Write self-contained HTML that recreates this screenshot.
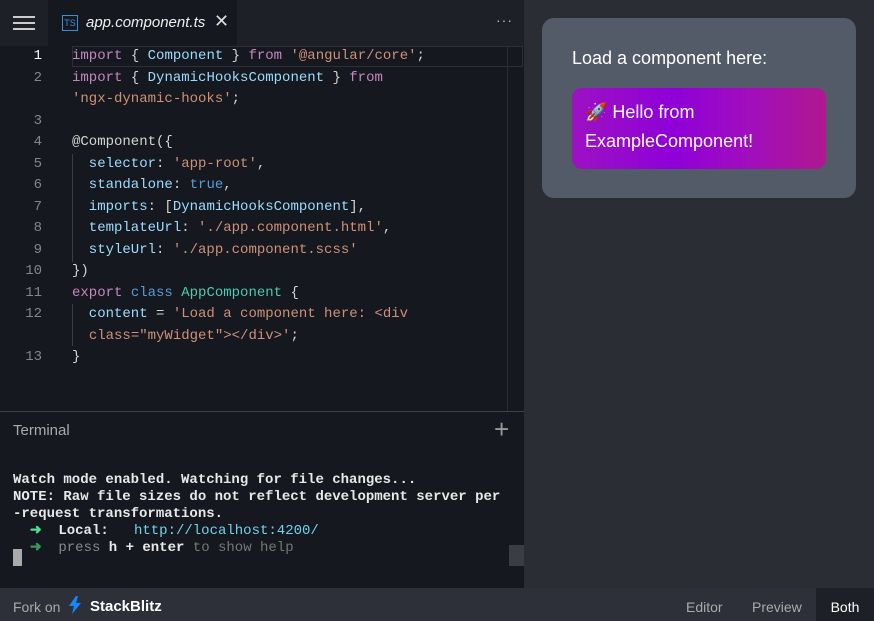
<!DOCTYPE html>
<html><head><style>
*{margin:0;padding:0;box-sizing:border-box}
html,body{width:874px;height:621px;overflow:hidden}
body{background:#2a2d34;font-family:"Liberation Sans",sans-serif;position:relative}
#ed{position:absolute;left:0;top:0;width:524px;height:411px;background:#15181e}
#tabs{position:absolute;left:0;top:0;width:524px;height:46px;background:#1d2027}
#menu{position:absolute;left:0;top:0;width:48px;height:46px;background:#1d2027}
#menu i{position:absolute;left:13px;width:22px;height:2px;background:#ccc}
#tab{position:absolute;left:48px;top:0;width:189px;height:46px;background:#15181e}
#code{position:absolute;left:0;top:46px;font-family:"Liberation Mono",monospace;font-size:14px;line-height:21.5px;white-space:pre;color:#9cdcfe}
.ln{position:absolute;left:0;width:42px;text-align:right;color:#858585}
.k{color:#c586c0}.s{color:#ce9178}.b{color:#569cd6}.t{color:#4ec9b0}.y{color:#ffd700}.w{color:#d4d4d4}
#term{position:absolute;left:0;top:411px;width:524px;height:177px;background:#15181e;border-top:1px solid #3c4048}
#tt{font-family:"Liberation Mono",monospace;font-size:14px;line-height:17px;color:#e8e8e8;position:absolute;left:13px;top:60px;white-space:pre;font-weight:bold}
#foot{position:absolute;left:0;top:588px;width:874px;height:33px;background:#2d3039;font-size:14px;color:#aaa}
</style></head><body>
<div id="ed">
<div id="tabs">
<div id="menu"><i style="top:16px"></i><i style="top:22px"></i><i style="top:28px"></i></div>
<div id="tab">
<div style="position:absolute;left:14px;top:15px;width:16px;height:16px;border:1px solid #3b8fd6;color:#3b8fd6;font-size:9px;line-height:14px;text-align:center">TS</div>
<div style="position:absolute;left:38px;top:14px;color:#eee;font-style:italic;font-size:15px">app.component.ts</div>
<div style="position:absolute;left:166px;top:11px;color:#ddd;font-size:18px">✕</div>
</div>
<div style="position:absolute;left:496px;top:12px;color:#bbb;font-size:14px;letter-spacing:1px">···</div>
</div>
<div style="position:absolute;left:72px;top:46px;width:451px;height:21px;border:1px solid #2c3038"></div>
<div style="position:absolute;left:507px;top:46px;width:1px;height:365px;background:#2a2d33"></div>
<div style="position:absolute;left:72px;top:154px;width:1px;height:108px;background:#3a3d44"></div>
<div style="position:absolute;left:72px;top:304px;width:1px;height:42px;background:#3a3d44"></div>
<div id="code">
<div class="ln" style="top:0;color:#fff">1</div><div class="ln" style="top:21.5px">2</div><div class="ln" style="top:64.5px">3</div><div class="ln" style="top:86px">4</div><div class="ln" style="top:107.5px">5</div><div class="ln" style="top:129px">6</div><div class="ln" style="top:150.5px">7</div><div class="ln" style="top:172px">8</div><div class="ln" style="top:193.5px">9</div><div class="ln" style="top:215px">10</div><div class="ln" style="top:236.5px">11</div><div class="ln" style="top:258px">12</div><div class="ln" style="top:301px">13</div>
<div style="position:absolute;left:72px;top:0"><span class="k">import</span> <span class="w">{</span> Component <span class="w">}</span> <span class="k">from</span> <span class="s">'@angular/core'</span><span class="w">;</span>
<span class="k">import</span> <span class="w">{</span> DynamicHooksComponent <span class="w">}</span> <span class="k">from</span>
<span class="s">'ngx-dynamic-hooks'</span><span class="w">;</span>

<span class="w">@Component({</span>
  selector<span class="w">:</span> <span class="s">'app-root'</span><span class="w">,</span>
  standalone<span class="w">:</span> <span class="b">true</span><span class="w">,</span>
  imports<span class="w">: [</span>DynamicHooksComponent<span class="w">],</span>
  templateUrl<span class="w">:</span> <span class="s">'./app.component.html'</span><span class="w">,</span>
  styleUrl<span class="w">:</span> <span class="s">'./app.component.scss'</span>
<span class="w">})</span>
<span class="k">export</span> <span class="b">class</span> <span class="t">AppComponent</span> <span class="w">{</span>
  content <span class="w">=</span> <span class="s">'Load a component here: &lt;div</span>
  <span class="s">class="myWidget"&gt;&lt;/div&gt;'</span><span class="w">;</span>
<span class="w">}</span></div>
</div>
</div>
<div id="term">
<div style="position:absolute;left:13px;top:10px;color:#aaa;font-size:15px">Terminal</div>
<div style="position:absolute;left:494px;top:2px;color:#999;font-size:26px;font-weight:300">+</div>
<div id="tt">Watch mode enabled. Watching for file changes...
NOTE: Raw file sizes do not reflect development server per
-request transformations.
  <span style="color:#4ee08a">➜</span>  Local:   <span style="color:#6fd3f0;font-weight:normal">http://localhost:4200/</span>
  <span style="color:#3a9a5a">➜</span>  <span style="color:#888;font-weight:normal">press</span> h + enter <span style="color:#777;font-weight:normal">to show help</span></div>
<div style="position:absolute;left:13px;top:137px;width:9px;height:17px;background:#aaa"></div>
<div style="position:absolute;left:509px;top:133px;width:15px;height:21px;background:#3a3d44"></div>
</div>
<div style="position:absolute;left:542px;top:18px;width:314px;height:180px;background:#535a68;border-radius:12px">
<div style="position:absolute;left:30px;top:30px;color:#fff;font-size:18px">Load a component here:</div>
<div style="position:absolute;left:30px;top:70px;width:254px;height:81px;border-radius:10px;background:linear-gradient(90deg,#9c12c2,#8f00d8 40%,#a10ebd 70%,#b0188f);color:#fff;font-size:18px;line-height:29px;padding:10px 13px">🚀 Hello from<br>ExampleComponent!</div>
</div>
<div id="foot">
<div style="position:absolute;left:13px;top:11px">Fork on</div>
<svg style="position:absolute;left:68px;top:8px" width="14" height="18" viewBox="0 0 14 18"><path d="M8 0L1 10h5l-2 8 9-11H8l2-7z" fill="#1389fd"/></svg>
<div style="position:absolute;left:90px;top:10px;color:#fff;font-weight:bold;font-size:15px">StackBlitz</div>
<div style="position:absolute;left:686px;top:11px">Editor</div>
<div style="position:absolute;left:752px;top:11px">Preview</div>
<div style="position:absolute;left:816px;top:0;width:58px;height:33px;background:#1d2027;color:#fff;text-align:center;line-height:38px">Both</div>
</div>
</body></html>
